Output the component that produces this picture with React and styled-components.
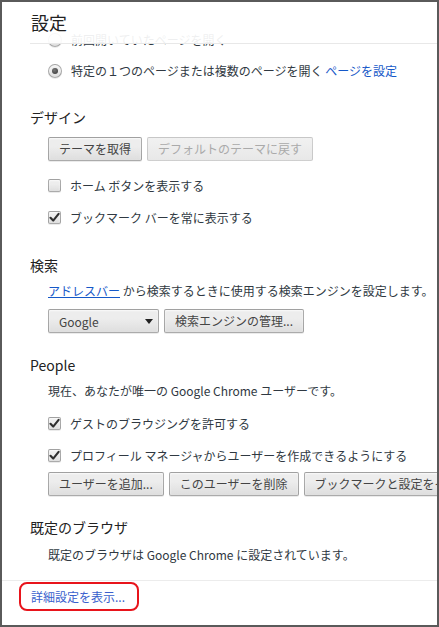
import React from "react";
import styled, { createGlobalStyle } from "styled-components";

const GlobalStyle = createGlobalStyle`
  body {
    margin: 0;
    background: #fff;
    font-family: "Noto Sans CJK JP", "Noto Sans", sans-serif;
  }
`;

const Frame = styled.div`
  position: relative;
  width: 439px;
  height: 627px;
  box-sizing: border-box;
  border: 2px solid #5a5a5a;
  overflow: hidden;
  background: #fff;
  display: flex;
  flex-direction: column;
`;

const Header = styled.header`
  position: absolute;
  top: 0;
  left: 28px;
  right: 0;
  height: 42px;
  padding-bottom: 2px;
  box-sizing: border-box;
  display: flex;
  align-items: center;
  background: rgba(255, 255, 255, 0.92);
  border-bottom: 1px solid #e8e8e8;
  z-index: 2;
  h1 {
    margin: 0;
    padding-left: 1px;
    font-size: 18px;
    line-height: 20px;
    font-weight: 400;
    color: #222;
  }
`;

const Content = styled.main`
  flex: 1;
  padding: 22px 0 0 28px;
  display: flex;
  flex-direction: column;
`;

const Section = styled.section`
  margin-top: ${(p) => p.$gap || 0}px;
`;

const SectionTitle = styled.h3`
  margin: 0;
  font-size: 14px;
  line-height: 20px;
  font-weight: 400;
  color: #222;
`;

const Indent = styled.div`
  padding-left: 18px;
  display: flex;
  flex-direction: column;
`;

const Text = styled.div`
  margin-top: ${(p) => p.$mt || 0}px;
  font-size: 12px;
  line-height: 20px;
  color: #303942;
  white-space: nowrap;
`;

const Link = styled.a`
  color: #1558c8;
  text-decoration: ${(p) => (p.$underline ? "underline" : "none")};
  cursor: pointer;
`;

const OptionRow = styled.label`
  display: flex;
  align-items: center;
  gap: 9px;
  height: ${(p) => p.$h || 32}px;
  margin-top: ${(p) => p.$mt || 0}px;
  font-size: 12px;
  color: #303942;
  white-space: nowrap;
`;

const controlFace = `
  border: 1px solid rgba(0, 0, 0, 0.28);
  background: linear-gradient(#ededed, #ededed 38%, #dedede);
  box-shadow: 0 1px 0 rgba(0, 0, 0, 0.08), inset 0 1px 2px rgba(255, 255, 255, 0.75);
`;

const Radio = styled.span`
  flex-shrink: 0;
  width: 14px;
  height: 14px;
  box-sizing: border-box;
  border-radius: 50%;
  ${controlFace}
  display: flex;
  align-items: center;
  justify-content: center;
  &::after {
    content: "";
    display: ${(p) => (p.$checked ? "block" : "none")};
    width: 6px;
    height: 6px;
    border-radius: 50%;
    background: radial-gradient(circle at 40% 35%, #777, #333);
  }
`;

const Box = styled.span`
  flex-shrink: 0;
  width: 13px;
  height: 13px;
  box-sizing: border-box;
  border-radius: 2px;
  ${controlFace}
  display: flex;
  align-items: center;
  justify-content: center;
  svg {
    display: block;
  }
`;

const Checkbox = ({ checked }) => (
  <Box>
    {checked && (
      <svg width="11" height="11" viewBox="0 0 11 11">
        <path
          d="M1.5 5.8 L4.2 8.6 L9.6 1.8"
          fill="none"
          stroke="#2f2f2f"
          strokeWidth="2.1"
          strokeLinecap="round"
          strokeLinejoin="round"
        />
      </svg>
    )}
  </Box>
);

const ButtonRow = styled.div`
  display: flex;
  gap: 5px;
  margin-top: ${(p) => p.$mt || 0}px;
`;

const Button = styled.button`
  flex-shrink: 0;
  height: 24px;
  box-sizing: border-box;
  padding: 0 10px;
  border-radius: 2px;
  ${controlFace}
  color: #444;
  font-family: inherit;
  font-size: 12px;
  line-height: 22px;
  white-space: nowrap;
  &:disabled {
    color: #aaa;
    border-color: rgba(0, 0, 0, 0.14);
    background: linear-gradient(#f1f1f1, #e8e8e8);
    box-shadow: none;
  }
`;

const Select = styled.div`
  flex-shrink: 0;
  width: 111px;
  height: 24px;
  box-sizing: border-box;
  padding: 0 5px 0 10px;
  border-radius: 2px;
  ${controlFace}
  display: flex;
  align-items: center;
  justify-content: space-between;
  font-size: 12px;
  color: #444;
  &::after {
    content: "";
    border-left: 4px solid transparent;
    border-right: 4px solid transparent;
    border-top: 5px solid #222;
  }
`;

const Footer = styled.footer`
  border-top: 1px solid #ececec;
  padding: 1px 0 14px 17px;
`;

const Annotated = styled.a`
  display: inline-block;
  padding: 3px 12px 2px 10px;
  border: 2px solid #e8141b;
  border-radius: 8px;
  font-size: 12px;
  line-height: 20px;
  color: #3a5fcd;
  cursor: pointer;
`;

export default function App() {
  return (
    <>
      <GlobalStyle />
      <Frame>
        <Header>
          <h1>設定</h1>
        </Header>
        <Content>
          <Section>
            <Indent>
              <OptionRow $h={31}>
                <Radio />
                前回開いていたページを開く
              </OptionRow>
              <OptionRow $h={31}>
                <Radio $checked />
                <span>
                  特定の１つのページまたは複数のページを開く <Link>ページを設定</Link>
                </span>
              </OptionRow>
            </Indent>
          </Section>

          <Section $gap={21}>
            <SectionTitle>デザイン</SectionTitle>
            <Indent>
              <ButtonRow $mt={10}>
                <Button>テーマを取得</Button>
                <Button disabled>デフォルトのテーマに戻す</Button>
              </ButtonRow>
              <OptionRow $mt={8}>
                <Checkbox />
                ホーム ボタンを表示する
              </OptionRow>
              <OptionRow>
                <Checkbox checked />
                ブックマーク バーを常に表示する
              </OptionRow>
            </Indent>
          </Section>

          <Section $gap={22}>
            <SectionTitle>検索</SectionTitle>
            <Indent>
              <Text $mt={6}>
                <Link $underline>アドレスバー</Link> から検索するときに使用する検索エンジンを設定します。
              </Text>
              <ButtonRow $mt={8}>
                <Select>Google</Select>
                <Button>検索エンジンの管理...</Button>
              </ButtonRow>
            </Indent>
          </Section>

          <Section $gap={22}>
            <SectionTitle>People</SectionTitle>
            <Indent>
              <Text $mt={6}>現在、あなたが唯一の Google Chrome ユーザーです。</Text>
              <OptionRow $mt={6}>
                <Checkbox checked />
                ゲストのブラウジングを許可する
              </OptionRow>
              <OptionRow>
                <Checkbox checked />
                プロフィール マネージャからユーザーを作成できるようにする
              </OptionRow>
              <ButtonRow $mt={1}>
                <Button>ユーザーを追加...</Button>
                <Button>このユーザーを削除</Button>
                <Button>ブックマークと設定をインポート...</Button>
              </ButtonRow>
            </Indent>
          </Section>

          <Section $gap={21}>
            <SectionTitle>既定のブラウザ</SectionTitle>
            <Indent>
              <Text $mt={8}>既定のブラウザは Google Chrome に設定されています。</Text>
            </Indent>
          </Section>
        </Content>
        <Footer>
          <Annotated>詳細設定を表示...</Annotated>
        </Footer>
      </Frame>
    </>
  );
}
